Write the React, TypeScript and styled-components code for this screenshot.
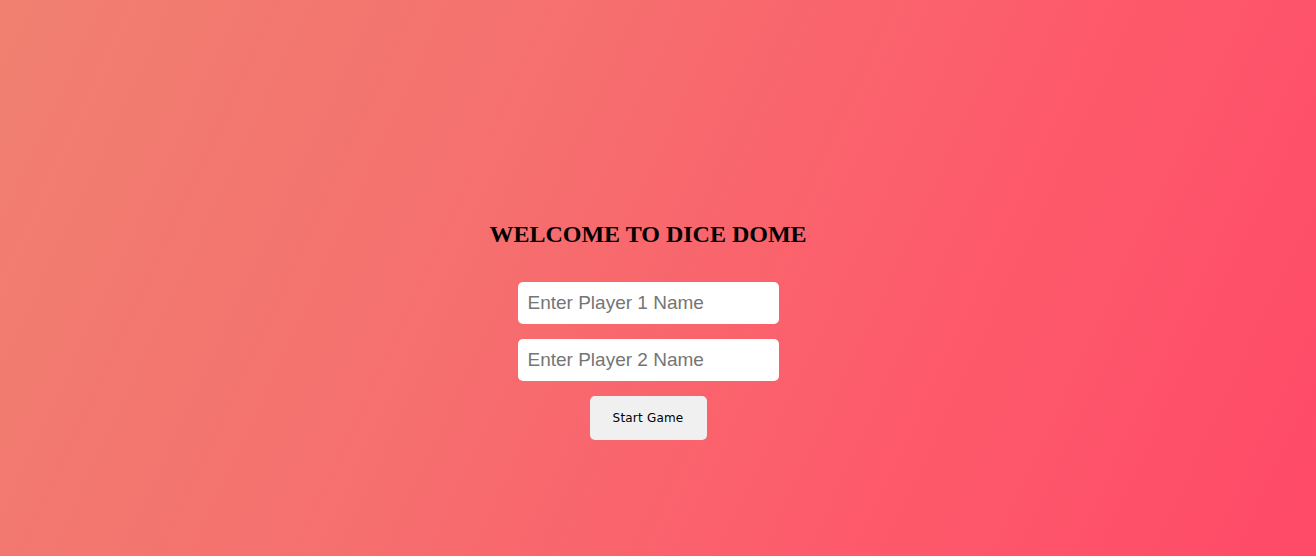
import styled, { createGlobalStyle } from "styled-components";

const GlobalStyle = createGlobalStyle`
  html, body {
    margin: 0;
    padding: 0;
  }
  body {
    font-family: "Liberation Serif", "Times New Roman", serif;
  }
`;

const Page = styled.div`
  min-height: 556px;
  box-sizing: border-box;
  padding: 221px 20px 0 0;
  display: flex;
  flex-direction: column;
  align-items: center;
  background: linear-gradient(115deg, #f08070 0%, #f5716f 35%, #fd5a6b 70%, #ff4a68 100%);
`;

const Title = styled.h2`
  margin: 0 0 34px;
  font-family: "Liberation Serif", "Times New Roman", serif;
  font-size: 24px;
  font-weight: bold;
  line-height: 27px;
  color: #000;
`;

const Form = styled.div`
  display: flex;
  flex-direction: column;
  align-items: center;
  gap: 15px;
`;

const NameInput = styled.input`
  box-sizing: border-box;
  width: 261px;
  height: 42px;
  padding: 0 10px;
  border: none;
  border-radius: 5px;
  background: #fff;
  font-family: "Liberation Sans", Arial, sans-serif;
  font-size: 19px;
  color: #333;
  outline: none;

  &::placeholder {
    color: #757575;
  }
`;

const StartButton = styled.button`
  width: 117px;
  height: 44px;
  border: none;
  border-radius: 5px;
  background: #f0f0f0;
  font-family: "DejaVu Sans", sans-serif;
  font-size: 12px;
  font-weight: normal;
  letter-spacing: 0.2px;
  color: #000;
  cursor: pointer;
`;

export default function App() {
  return (
    <>
      <GlobalStyle />
      <Page>
        <Title>WELCOME TO DICE DOME</Title>
        <Form>
          <NameInput placeholder="Enter Player 1 Name" />
          <NameInput placeholder="Enter Player 2 Name" />
          <StartButton>Start Game</StartButton>
        </Form>
      </Page>
    </>
  );
}
